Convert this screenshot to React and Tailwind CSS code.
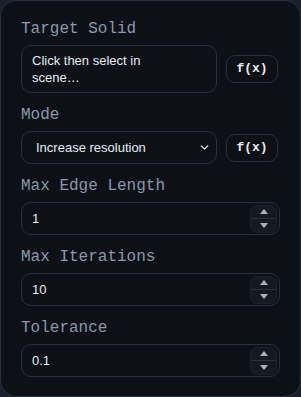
import { ChevronDown } from "lucide-react";

// small f(x) toggle next to a field
function FxButton() {
  return (
    <button className="flex h-[28px] w-[52px] shrink-0 items-center justify-center rounded-[9px] border border-[#2b313b] bg-[#0d1117] font-['Liberation_Mono',monospace] text-[13px] font-bold text-[#e6edf3]">
      f(x)
    </button>
  );
}

function Label({ children }) {
  return (
    <p className="font-['Liberation_Mono',monospace] text-[16px] leading-[20px] text-[#8b98aa]">
      {children}
    </p>
  );
}

function NumberField({ value }) {
  return (
    <div className="flex h-[33px] items-center rounded-[10px] border border-[#2b313b] bg-[#0d1117] pl-[10px] pr-[2px]">
      <span className="flex-1 font-['Liberation_Sans',sans-serif] text-[13px] text-[#e6edf3]">
        {value}
      </span>
      <div className="flex h-[28px] w-[27px] flex-col items-center justify-center rounded-[7px] border border-[#1c222b] bg-[#151a22]">
        <div className="flex flex-1 items-center justify-center">
          <svg width="8" height="5" viewBox="0 0 8 5">
            <path d="M4 0 L8 5 L0 5 Z" fill="#aab3c0" />
          </svg>
        </div>
        <div className="h-px w-full bg-[#2b313b]" />
        <div className="flex flex-1 items-center justify-center">
          <svg width="8" height="5" viewBox="0 0 8 5">
            <path d="M0 0 L8 0 L4 5 Z" fill="#aab3c0" />
          </svg>
        </div>
      </div>
    </div>
  );
}

export default function App() {
  return (
    <div className="h-[397px] w-[301px] bg-[#1a202b]">
      <div className="flex h-full flex-col gap-[12px] rounded-[16px] border border-[#2b313b] bg-[#0d1117] px-5 pt-[18px]">
        {/* TARGET SOLID */}
        <div className="flex flex-col gap-[6px]">
          <Label>Target Solid</Label>
          <div className="flex items-center gap-[9px]">
            <div className="w-[196px] rounded-[10px] border border-[#2b313b] py-[6px] pl-[10px] pr-[28px] font-['Liberation_Sans',sans-serif] text-[13px] leading-[17px] text-[#e6edf3]">
              Click then select in scene…
            </div>
            <FxButton />
          </div>
        </div>

        {/* MODE */}
        <div className="flex flex-col gap-[6px]">
          <Label>Mode</Label>
          <div className="flex items-center gap-[9px]">
            <div className="flex h-[33px] w-[196px] items-center justify-between rounded-[10px] border border-[#2b313b] pl-[14px] pr-[5px] font-['Liberation_Sans',sans-serif] text-[13px] text-[#e6edf3]">
              <span>Increase resolution</span>
              <ChevronDown size={13} strokeWidth={2.5} color="#e6edf3" />
            </div>
            <FxButton />
          </div>
        </div>

        <div className="flex flex-col gap-[6px]">
          <Label>Max Edge Length</Label>
          <NumberField value="1" />
        </div>

        <div className="flex flex-col gap-[6px]">
          <Label>Max Iterations</Label>
          <NumberField value="10" />
        </div>

        <div className="flex flex-col gap-[6px]">
          <Label>Tolerance</Label>
          <NumberField value="0.1" />
        </div>
      </div>
    </div>
  );
}
